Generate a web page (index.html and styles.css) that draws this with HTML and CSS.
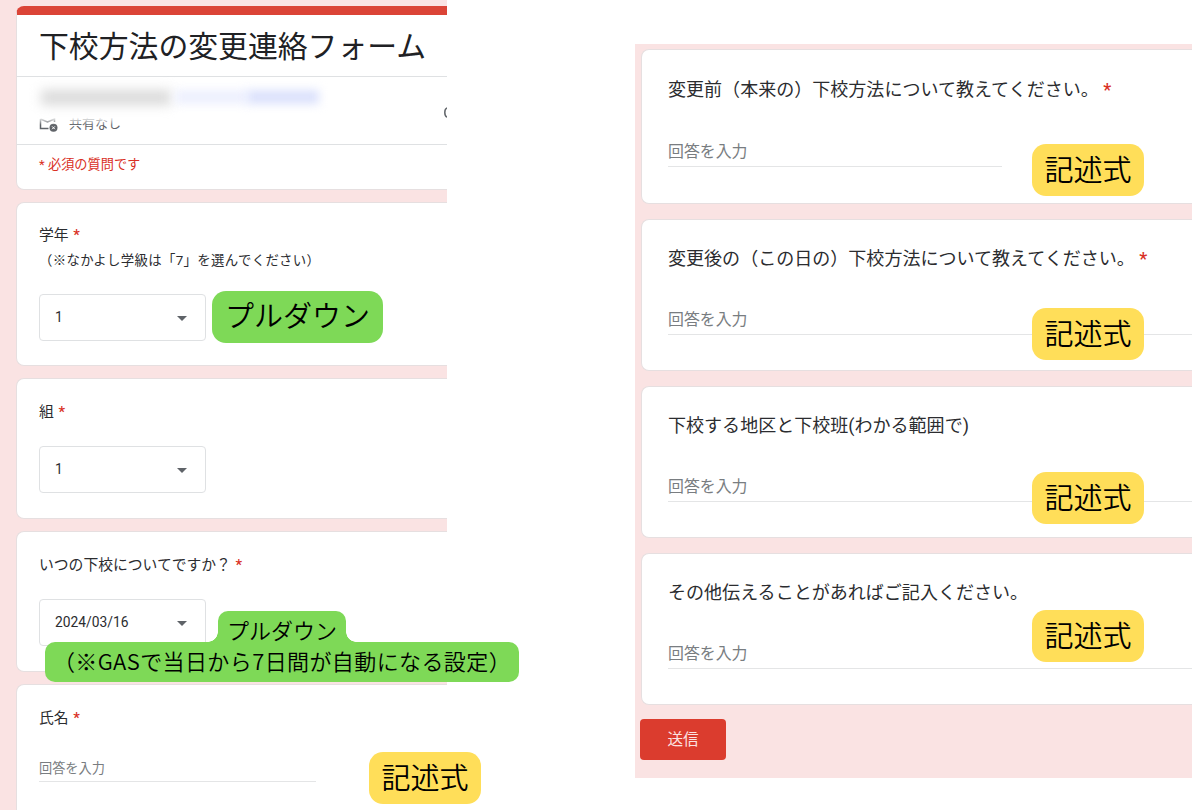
FILE: index.html
```html
<!DOCTYPE html>
<html lang="ja">

<head>
    <meta charset="UTF-8">
    <meta name="viewport" content="width=device-width, initial-scale=1.0">
    <title>下校方法の変更連絡フォーム</title>
    <link rel="stylesheet" href="styles.css">
</head>

<body>
    <div class="page">
        <div class="panel left">
            <div class="card header">
                <h1>下校方法の変更連絡フォーム</h1>
                <div class="account">
                    <div class="share">
                        <svg class="share-icon" width="19" height="18" viewBox="0 0 19 18">
                            <path d="M1.500 4v9.500h8M1.500 4l7 3 7-3v3" fill="none" stroke="#5f6368" stroke-width="1.500" />
                            <circle cx="14.500" cy="12.800" r="4" fill="#5f6368" />
                            <path d="M13.100 11.400l2.800 2.800M15.900 11.400l-2.800 2.800" stroke="#fff" stroke-width="1" />
                        </svg>
                        <span>共有なし</span>
                    </div>
                    <div class="mask">
                        <div class="mask-name"></div>
                        <div class="mask-link"></div>
                        <div class="mask-link strong"></div>
                    </div>
                    <svg class="cloud" width="4" height="14" viewBox="0 0 4 14">
                        <path d="M5 1.800C3 2 1.800 4 1.800 6.500S3 11 5 11.300" fill="none" stroke="#5f6368" stroke-width="1.500" />
                    </svg>
                </div>
                <p class="required-note">* 必須の質問です</p>
            </div>

            <div class="card grade">
                <div class="question">学年 <span class="star">*</span></div>
                <div class="description">（※なかよし学級は「7」を選んでください）</div>
                <div class="select"><span>1</span><i class="arrow"></i></div>
                <div class="tag green">プルダウン</div>
            </div>

            <div class="card">
                <div class="question">組 <span class="star">*</span></div>
                <div class="select"><span>1</span><i class="arrow"></i></div>
            </div>

            <div class="card date">
                <div class="question">いつの下校についてですか？ <span class="star">*</span></div>
                <div class="select"><span>2024/03/16</span><i class="arrow"></i></div>
                <div class="note">
                    <div class="note-top">プルダウン</div>
                    <div class="note-bottom">（※GASで当日から7日間が自動になる設定）</div>
                </div>
            </div>

            <div class="card name">
                <div class="question">氏名 <span class="star">*</span></div>
                <div class="answer">回答を入力</div>
                <div class="tag yellow">記述式</div>
            </div>
        </div>

        <div class="panel right">
            <div class="card before">
                <div class="question">変更前（本来の）下校方法について教えてください。 <span class="star">*</span></div>
                <div class="answer">回答を入力</div>
                <div class="tag yellow">記述式</div>
            </div>
            <div class="card after">
                <div class="question">変更後の（この日の）下校方法について教えてください。 <span class="star">*</span></div>
                <div class="answer">回答を入力</div>
                <div class="tag yellow">記述式</div>
            </div>
            <div class="card area">
                <div class="question">下校する地区と下校班(わかる範囲で)</div>
                <div class="answer">回答を入力</div>
                <div class="tag yellow">記述式</div>
            </div>
            <div class="card other">
                <div class="question">その他伝えることがあればご記入ください。</div>
                <div class="answer">回答を入力</div>
                <div class="tag yellow">記述式</div>
            </div>
            <button class="submit">送信</button>
        </div>
    </div>
</body>

</html>
```
FILE: styles.css
```css
* {
    box-sizing: border-box;
}

body {
    margin: 0;
    background-color: #fff;
    color: #2b2c2f;
    font-family: Roboto, "Noto Sans CJK JP", sans-serif;
}

.page {
    display: flex;
    justify-content: space-between;
    align-items: flex-start;
    height: 810px;
    padding-right: 8px;
    overflow: hidden;
}

.panel {
    display: flex;
    flex-direction: column;
    background-color: #fae3e3;
}

.left {
    width: 447px;
    height: 810px;
    padding: 6px 0 0 16px;
    gap: 12px;
}

.right {
    width: 557px;
    height: 734px;
    margin-top: 44px;
    padding: 5px 0 0 6px;
    gap: 15px;
}

.card {
    position: relative;
    flex-shrink: 0;
    height: 141px;
    padding: 22px 0 0 22px;
    background-color: #fff;
    border: 1px solid #e6dfe0;
    border-right: none;
    border-radius: 8px 0 0 8px;
}

/* header */
.header {
    height: 184px;
    padding: 0;
    border-top: 9px solid #db4437;
}

h1 {
    height: 62px;
    margin: 0;
    padding-left: 22px;
    border-bottom: 1px solid #dfe1e3;
    font-size: 29.85px;
    font-weight: 400;
    line-height: 63px;
    color: #202124;
    white-space: nowrap;
}

.account {
    position: relative;
    height: 68px;
    padding: 38px 0 0 22px;
    border-bottom: 1px solid #dfe1e3;
}

.share {
    display: flex;
    gap: 11px;
    height: 18px;
    font-size: 13px;
    line-height: 17px;
    color: #5f6368;
}

/* the address is hidden behind a blurred patch */
.mask {
    position: absolute;
    left: 16px;
    top: 0;
    display: flex;
    align-items: center;
    width: 302px;
    height: 48px;
    padding: 0 10px 8px 8px;
    background: linear-gradient(#fff 84%, rgba(255, 255, 255, 0));
}

.mask-name {
    width: 130px;
    height: 15px;
    background-color: #dadada;
    filter: blur(6px);
}

.mask-link {
    width: 72px;
    height: 14px;
    margin-left: 4px;
    background-color: #edf0fe;
    filter: blur(5px);
}

.mask-link.strong {
    margin-left: 0;
    background-color: #dbe1fc;
}

.cloud {
    position: absolute;
    right: 0;
    top: 29px;
}

.required-note {
    margin: 0;
    padding-left: 22px;
    font-size: 13.2px;
    line-height: 39px;
    color: #d93025;
}

/* questions */
.question {
    height: 22px;
    font-size: 14.8px;
    line-height: 22px;
    white-space: nowrap;
}

.star {
    color: #d93025;
    font-weight: 500;
}

.left .star {
    margin-left: 1px;
}

.description {
    height: 20px;
    margin-top: 5px;
    font-size: 13.4px;
    letter-spacing: 0.35px;
    line-height: 20px;
    white-space: nowrap;
}

.select {
    display: flex;
    justify-content: space-between;
    align-items: center;
    width: 167px;
    height: 47px;
    margin-top: 23px;
    padding: 0 18px 1px 15px;
    border: 1px solid #dfe1e3;
    border-radius: 4px;
    font-size: 13.8px;
}

.grade {
    height: 164px;
    padding-top: 21px;
}

.grade .select {
    margin-top: 23px;
}

.arrow {
    margin-top: 2px;
    border-left: 5px solid transparent;
    border-right: 5px solid transparent;
    border-top: 5px solid #5f6368;
}

.answer {
    width: 277px;
    height: 24px;
    margin-top: 29px;
    border-bottom: 1px solid #e4e5e6;
    font-size: 13.2px;
    line-height: 20px;
    color: #797d81;
    padding-top: 1px;
}

.right .card {
    height: 152px;
    padding: 26px 0 0 26px;
}

.right .question {
    height: 26px;
    font-size: 18.05px;
    line-height: 26px;
}

.right .answer {
    width: auto;
    height: 38px;
    margin-top: 25px;
    padding-top: 11px;
    font-size: 15.9px;
    line-height: 24px;
}

.right .before {
    height: 155px;
    padding-top: 27px;
}

.right .before .answer {
    width: 334px;
    margin-top: 26px;
}

.submit {
    flex-shrink: 0;
    width: 86px;
    height: 41px;
    margin: -1px 0 0 -1px;
    padding: 0 0 3px;
    background-color: #db3c2e;
    border: none;
    border-radius: 4px;
    color: #fbe3e1;
    font-family: inherit;
    font-size: 15.6px;
}

/* stickers over the form */
.tag {
    position: absolute;
    width: 112px;
    height: 52px;
    border-radius: 14px;
    font-family: "Noto Sans CJK JP", sans-serif;
    font-size: 29px;
    font-weight: 350;
    line-height: 49px;
    text-align: center;
    white-space: nowrap;
    color: #000;
    z-index: 1;
}

.yellow {
    background-color: #ffde59;
}

.green {
    left: 195px;
    top: 88px;
    width: 171px;
    background-color: #7ed957;
    line-height: 47px;
}

.name .tag {
    left: 352px;
    top: 67px;
}

.right .tag {
    left: 390px;
}

.before .tag {
    top: 94px;
}

.after .tag {
    top: 88px;
}

.area .tag {
    top: 85px;
}

.other .tag {
    top: 56px;
}

.note {
    position: absolute;
    left: 28px;
    top: 79px;
    width: 474px;
    z-index: 1;
    font-family: "Noto Sans CJK JP", sans-serif;
    font-size: 22px;
    font-weight: 350;
    text-align: center;
    white-space: nowrap;
    color: #000;
}

.note-top {
    position: relative;
    width: 128px;
    height: 31px;
    margin-left: 173px;
    border-radius: 10px 10px 0 0;
    background-color: #7ed957;
    line-height: 36px;
}

/* inner curves where the two lines join */
.note-top::before,
.note-top::after {
    content: "";
    position: absolute;
    bottom: 0;
    width: 10px;
    height: 10px;
}

.note-top::before {
    left: -10px;
    background: radial-gradient(circle at 0 0, transparent 9.5px, #7ed957 10px);
}

.note-top::after {
    right: -10px;
    background: radial-gradient(circle at 100% 0, transparent 9.5px, #7ed957 10px);
}

.note-bottom {
    height: 40px;
    border-radius: 10px;
    background-color: #7ed957;
    letter-spacing: 0.4px;
    line-height: 37px;
}
```
